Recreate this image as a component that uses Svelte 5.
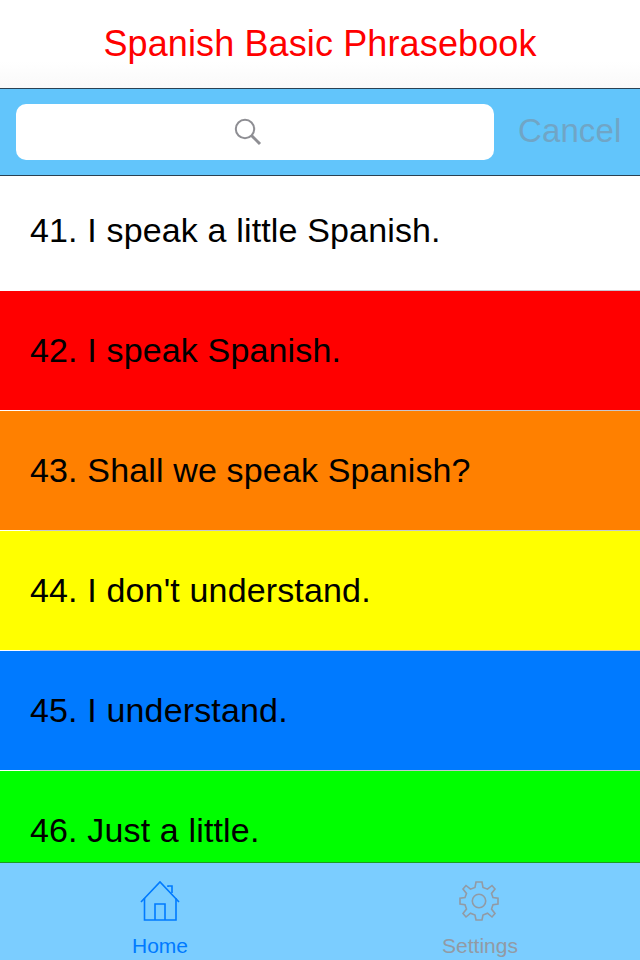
<script>
	const phrases = [
		{ text: '41. I speak a little Spanish.', color: '#ffffff' },
		{ text: '42. I speak Spanish.', color: '#ff0000' },
		{ text: '43. Shall we speak Spanish?', color: '#ff8000' },
		{ text: "44. I don't understand.", color: '#ffff00' },
		{ text: '45. I understand.', color: '#007aff' },
		{ text: '46. Just a little.', color: '#00ff00' }
	];
</script>

<div class="screen">
	<header class="title-bar">
		<h1>Spanish Basic Phrasebook</h1>
	</header>

	<div class="search-bar">
		<div class="search-field">
			<svg width="28" height="28" viewBox="0 0 28 28" fill="none" stroke="#8e8e93" aria-hidden="true">
				<circle cx="11" cy="11" r="9.2" stroke-width="2" />
				<path d="M17.5 17.5 L26 26" stroke-width="3" />
			</svg>
		</div>
		<span class="cancel">Cancel</span>
	</div>

	<ul class="list">
		{#each phrases as phrase}
			<li class="row" style="background: {phrase.color}">
				<span class="phrase">{phrase.text}</span>
			</li>
		{/each}
	</ul>

	<nav class="tab-bar">
		<div class="tab active">
			<svg width="42" height="42" viewBox="0 0 42 42" fill="none" stroke="#007aff" stroke-width="1.6" aria-hidden="true">
				<path d="M2 22 L21 2 L40 22" />
				<path d="M5.5 18 V40 H37 V18" />
				<path d="M16 40 V24 H26 V40" />
				<path d="M29 7 V6 H33 V13" />
			</svg>
			<span>Home</span>
		</div>
		<div class="tab">
			<svg width="42" height="42" viewBox="1 0 42 42" fill="none" stroke="#929aa4" stroke-width="1.6" aria-hidden="true">
				<circle cx="21" cy="21" r="6.7" />
				<path d="M18 2 H24 L25 7.5 L29.5 9.2 L34 5.5 L37 9 L33.5 13.5 L35 17.5 L40 18.2 V24 L35 24.8 L33.5 29 L37 33.5 L34 37 L29.5 33.2 L25 35 L24 40 H18 L17 35 L12.5 33.2 L8 37 L5 33.5 L8.5 29 L7 24.8 L2 24 V18.2 L7 17.5 L8.5 13.5 L5 9 L8 5.5 L12.5 9.2 L17 7.5 Z" />
			</svg>
			<span>Settings</span>
		</div>
	</nav>
</div>

<style>
	:global(body) {
		margin: 0;
	}

	.screen {
		width: 640px;
		height: 960px;
		display: flex;
		flex-direction: column;
		overflow: hidden;
		font-family: 'Liberation Sans', Arial, sans-serif;
		background: #fff;
	}

	.title-bar {
		height: 88px;
		flex-shrink: 0;
		display: flex;
		align-items: center;
		justify-content: center;
		background: linear-gradient(#ffffff 70%, #f9f9f9);
	}

	h1 {
		margin: 0;
		font-size: 36px;
		font-weight: 400;
		letter-spacing: 0.12px;
		color: #ff0000;
	}

	.search-bar {
		height: 88px;
		flex-shrink: 0;
		box-sizing: border-box;
		display: flex;
		align-items: center;
		padding: 0 18px 0 16px;
		gap: 24px;
		background: #62c5fb;
		border-top: 1px solid #2a4152;
		border-bottom: 1px solid #2a4152;
	}

	.search-field {
		width: 478px;
		height: 56px;
		border-radius: 10px;
		background: #fff;
		display: flex;
		align-items: center;
		justify-content: center;
		padding-right: 14px;
		box-sizing: border-box;
	}

	.cancel {
		font-size: 33px;
		letter-spacing: 0.1px;
		color: #70a5c6;
		margin-top: -2px;
	}

	.list {
		list-style: none;
		margin: 0;
		padding: 0;
		flex: 1;
		min-height: 0;
		overflow: hidden;
	}

	.row {
		height: 120px;
		box-sizing: border-box;
		display: flex;
		align-items: center;
		padding-left: 30px;
		position: relative;
		border-bottom: 1px solid #fff;
	}

	.row:first-child {
		height: 115px;
		padding-bottom: 5px;
	}

	.row::after {
		content: '';
		position: absolute;
		left: 30px;
		right: 0;
		bottom: -1px;
		height: 1px;
		background: #c8c7cc;
	}

	.phrase {
		font-size: 34px;
		letter-spacing: 0.15px;
		color: #000;
	}

	.tab-bar {
		height: 98px;
		flex-shrink: 0;
		display: flex;
		box-sizing: border-box;
		background: #7bcdff;
		border-top: 1px solid #1f9a1f;
	}

	.tab {
		flex: 1;
		display: flex;
		flex-direction: column;
		align-items: center;
		padding-top: 17px;
		color: #929aa4;
		font-size: 21px;
		gap: 12px;
	}

	.tab.active {
		color: #007aff;
	}
</style>
